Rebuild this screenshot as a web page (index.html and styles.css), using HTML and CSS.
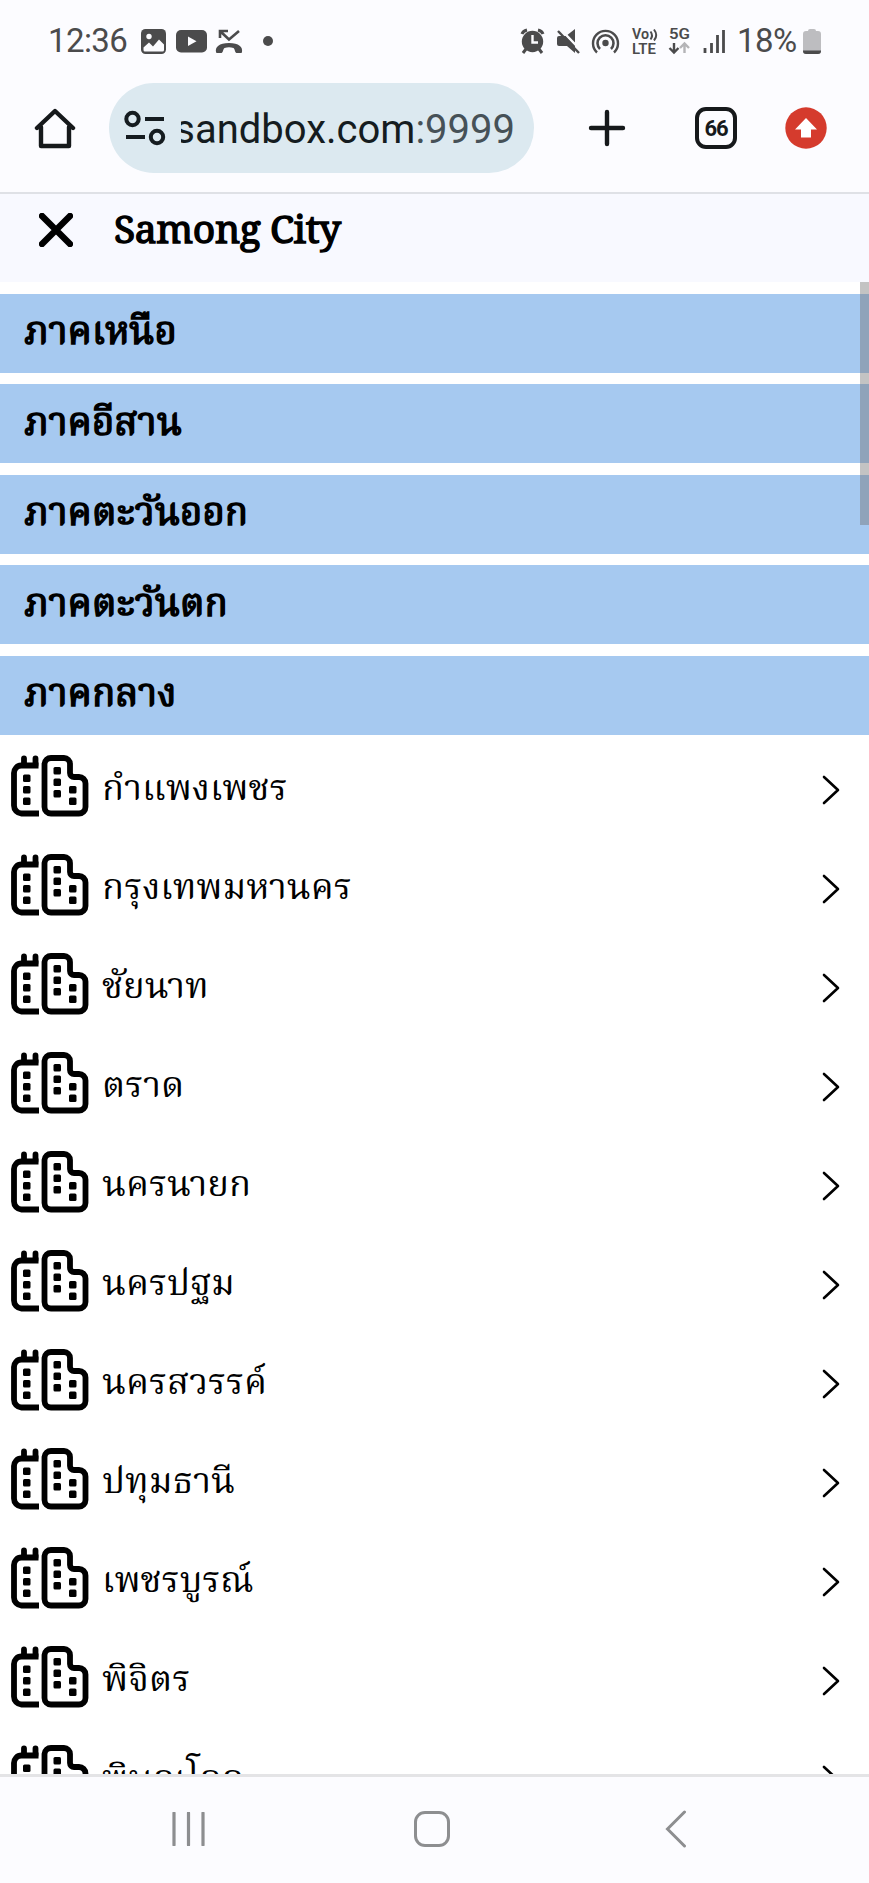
FILE: index.html
```html
<!DOCTYPE html>
<html lang="th">
<head>
  <meta charset="UTF-8">
  <meta name="viewport" content="width=device-width, initial-scale=1.0">
  <title>Samong City</title>
  <link rel="stylesheet" href="styles.css">
</head>
<body>
  <svg class="symbols">
    <symbol id="city" viewBox="0 0 78 62">
      <g fill="none" stroke="#000" stroke-width="5.8">
        <path d="M27.5 10.5H10.5a7.500 7.500 0 0 0-7.500 8v32a8 8 0 0 0 7.500 8H28" />
        <path d="M13 10V3.500M24.500 10V3.500" stroke-linecap="round" />
        <path d="M40 3H53a6 6 0 0 1 6 6V18a4 4 0 0 0 4 4h5a6.500 6.500 0 0 1 6.500 6.500V52a6.500 6.500 0 0 1-6.500 6.500H40a6.500 6.500 0 0 1-6.500-6.500V9A6.500 6.500 0 0 1 40 3z" />
      </g>
      <g class="windows">
        <rect x="12" y="19.500" width="7.500" height="7.500" rx="1.500" /><rect x="12" y="31" width="7.500" height="7.500" rx="1.500" /><rect x="12" y="42.500" width="7.500" height="7.500" rx="1.500" />
        <rect x="42.500" y="12" width="7.500" height="7.500" rx="1.500" /><rect x="42.500" y="23.500" width="7.500" height="7.500" rx="1.500" /><rect x="42.500" y="35" width="7.500" height="7.500" rx="1.500" />
        <rect x="58" y="31" width="7.500" height="7.500" rx="1.500" /><rect x="58" y="42.500" width="7.500" height="7.500" rx="1.500" />
      </g>
    </symbol>
    <symbol id="arrow" viewBox="0 0 18 30">
      <path d="M2 2L16 15L2 28" fill="none" stroke="#000" stroke-width="2.600" stroke-linecap="round" stroke-linejoin="round" />
    </symbol>
  </svg>

  <div class="status">
    <span class="clock">12:36</span>
    <svg class="notifications" viewBox="0 0 134 28">
      <rect x="0" y="2" width="25" height="25" rx="4.500" fill="#4b4b4c" />
      <circle cx="8" cy="9.500" r="2.700" fill="#fcfcff" />
      <path d="M2.500 20.500l5.500-5 4 4 6-7 5 5V23q0 1.500-1.500 1.500H4Q2.500 24.500 2.500 23z" fill="#fcfcff" />
      <rect x="35" y="3" width="31" height="22.500" rx="5" fill="#4b4b4c" />
      <path d="M47 9.500v9.500l8.500-4.700z" fill="#fcfcff" />
      <path d="M75 25c-1-5 3-9 13-9s14 4 13 9c0 1-1 1-2 1h-3.500c-1.500 0-1.500-4-3-5-3-1-6-1-9 0-1.500 1-1.500 5-3 5H77c-1 0-2 0-2-1z" fill="#4b4b4c" />
      <path d="M79 11V4h8M79 4l9 8.500L98 4" fill="none" stroke="#4b4b4c" stroke-width="2.600" />
      <circle cx="127" cy="14" r="5" fill="#4b4b4c" />
    </svg>
    <svg class="indicators" viewBox="0 0 208 28">
      <g fill="none" stroke="#4b4b4c" stroke-width="2.400">
        <circle cx="12.500" cy="14.500" r="9.500" fill="#4b4b4c" />
        <path d="M2 7q1-3 5-4M23 7q-1-3-5-4M6 22l-3 4M19 22l3 4" stroke-width="3" />
        <path d="M12.500 8v7.500h5.500" stroke="#fcfcff" />
        <path d="M46 9l9-7v14z" fill="#4b4b4c" stroke="none" />
        <path d="M37 11q0-2 2-2h7l9 9v8l-8-7h-8q-2 0-2-2z" fill="#4b4b4c" stroke="none" />
        <path d="M41 2.500l20 21" stroke="#fcfcff" stroke-width="2.400" />
        <path d="M38 4l21 22" />
        <path d="M77 25.500a12.500 12.500 0 1 1 17 0" />
        <path d="M80 22a8 8 0 1 1 11 0" stroke-width="2.600" />
        <circle cx="85.500" cy="16" r="2" fill="#4b4b4c" />
        <path d="M130.500 4.500q3 4 0 8M134 2.500q4.500 6 0 11" stroke-width="2" />
        <path d="M154 16v9M149.500 21l4.500 4.500 4.500-4.500" />
        <path d="M164.500 26v-9M160 21l4.500-4.500 4.500 4.500" stroke="#b4b4b7" />
        <path d="M185 21v5M191.500 16v10M197.500 8v18M203.500 3v23" stroke-width="2.800" />
      </g>
      <g class="indicator-text">
        <text x="112" y="12" textLength="17" lengthAdjust="spacingAndGlyphs">Vo</text>
        <text x="112" y="26.500" textLength="24" lengthAdjust="spacingAndGlyphs">LTE</text>
        <text x="149" y="12" textLength="21" lengthAdjust="spacingAndGlyphs">5G</text>
      </g>
    </svg>
    <span class="percent">18%</span>
    <svg class="battery" viewBox="0 0 18 25">
      <path d="M5 2q0-2 2-2h4q2 0 2 2h2q3 0 3 3v17q0 3-3 3H3q-3 0-3-3V5q0-3 3-3z" fill="#bdbdc0" />
      <path d="M0 21.500h18v.5q0 3-3 3H3q-3 0-3-3z" fill="#4b4b4c" />
    </svg>
  </div>

  <div class="toolbar">
    <svg class="home" viewBox="0 0 42 42">
      <path d="M3 21L21 4l18 17M7 20v19h28V20" fill="none" stroke="#16191b" stroke-width="4.400" stroke-linecap="round" stroke-linejoin="round" />
    </svg>
    <div class="address">
      <svg class="tune" viewBox="0 0 42 36">
        <g fill="none" stroke="#151c20" stroke-width="4">
          <circle cx="8.500" cy="9" r="6.200" /><circle cx="33" cy="27" r="6.200" />
          <path d="M21 9h19M2 27h19" />
        </g>
      </svg>
      <div class="url"><span>sandbox.com<span class="port">:9999</span></span></div>
    </div>
    <svg class="plus" viewBox="0 0 38 38">
      <path d="M3 19h32M19 3v32" stroke="#16191b" stroke-width="4.400" stroke-linecap="round" />
    </svg>
    <div class="tabs">66</div>
    <svg class="update" viewBox="0 0 42 42">
      <circle cx="21" cy="21" r="20.700" fill="#d53b2d" />
      <path d="M21 11L32 22.500H26V30.500H16V22.500H10z" fill="#fff" />
    </svg>
  </div>

  <main>
    <header>
      <svg class="close" viewBox="0 0 34 34">
        <path d="M3 3l28 28M31 3L3 31" stroke="#000" stroke-width="6.400" stroke-linecap="round" />
      </svg>
      <div class="title">Samong City</div>
    </header>
    <div class="content">
      <div class="region">ภาคเหนือ</div>
      <div class="region">ภาคอีสาน</div>
      <div class="region">ภาคตะวันออก</div>
      <div class="region">ภาคตะวันตก</div>
      <div class="region">ภาคกลาง</div>
      <div class="cities">
        <div class="city"><svg class="city-icon"><use href="#city" /></svg><span class="name">กำแพงเพชร</span><svg class="arrow"><use href="#arrow" /></svg></div>
        <div class="city"><svg class="city-icon"><use href="#city" /></svg><span class="name">กรุงเทพมหานคร</span><svg class="arrow"><use href="#arrow" /></svg></div>
        <div class="city"><svg class="city-icon"><use href="#city" /></svg><span class="name">ชัยนาท</span><svg class="arrow"><use href="#arrow" /></svg></div>
        <div class="city"><svg class="city-icon"><use href="#city" /></svg><span class="name">ตราด</span><svg class="arrow"><use href="#arrow" /></svg></div>
        <div class="city"><svg class="city-icon"><use href="#city" /></svg><span class="name">นครนายก</span><svg class="arrow"><use href="#arrow" /></svg></div>
        <div class="city"><svg class="city-icon"><use href="#city" /></svg><span class="name">นครปฐม</span><svg class="arrow"><use href="#arrow" /></svg></div>
        <div class="city"><svg class="city-icon"><use href="#city" /></svg><span class="name">นครสวรรค์</span><svg class="arrow"><use href="#arrow" /></svg></div>
        <div class="city"><svg class="city-icon"><use href="#city" /></svg><span class="name">ปทุมธานี</span><svg class="arrow"><use href="#arrow" /></svg></div>
        <div class="city"><svg class="city-icon"><use href="#city" /></svg><span class="name">เพชรบูรณ์</span><svg class="arrow"><use href="#arrow" /></svg></div>
        <div class="city"><svg class="city-icon"><use href="#city" /></svg><span class="name">พิจิตร</span><svg class="arrow"><use href="#arrow" /></svg></div>
        <div class="city"><svg class="city-icon"><use href="#city" /></svg><span class="name">พิษณุโลก</span><svg class="arrow"><use href="#arrow" /></svg></div>
      </div>
      <div class="scrollbar"></div>
    </div>
  </main>

  <nav>
    <svg class="recents" viewBox="0 0 34 34">
      <path d="M2 1v32M16.500 1v32M31 1v32" stroke="#8d8e90" stroke-width="3.200" stroke-linecap="round" />
    </svg>
    <div class="home-button"></div>
    <svg class="back" viewBox="0 0 22 38">
      <path d="M19.500 2L2.500 19l17 17" fill="none" stroke="#8d8e90" stroke-width="3" stroke-linecap="round" />
    </svg>
  </nav>
</body>
</html>
```

FILE: styles.css
```css
* { box-sizing: border-box; }

body {
  margin: 0;
  height: 1883px;
  display: flex;
  flex-direction: column;
  overflow: hidden;
  background-color: #fcfcff;
  font-family: Roboto, sans-serif;
}

svg {
  display: block;
  flex: none;
}

.symbols {
  position: absolute;
  width: 0;
  height: 0;
}

.status {
  flex: none;
  display: flex;
  align-items: center;
  height: 82px;
  padding: 0 48px 0 48px;
  color: #4b4b4c;
  font-size: 33px;
  font-weight: 400;
}

.clock {
  width: 93px;
  margin-top: -1px;
  letter-spacing: -0.6px;
}

.notifications {
  width: 134px;
  height: 28px;
}

.indicators {
  width: 208px;
  height: 28px;
  margin-left: auto;
}

.indicator-text {
  fill: #4b4b4c;
  font-size: 14px;
  font-weight: 600;
}

.percent {
  width: 65px;
  margin-top: -1px;
  margin-left: 9px;
  letter-spacing: -0.5px;
}

.battery {
  width: 18px;
  height: 25px;
  margin-left: 1px;
}

.toolbar {
  flex: none;
  display: flex;
  align-items: center;
  height: 112px;
  padding: 0 42px 18px 34px;
  border-bottom: 2px solid #dfe1e6;
}

.home {
  width: 42px;
  height: 42px;
}

.address {
  display: flex;
  align-items: center;
  width: 425px;
  height: 90px;
  margin-left: 33px;
  padding-left: 15px;
  border-radius: 45px;
  background-color: #dce9f0;
}

.tune {
  width: 42px;
  height: 36px;
}

.url {
  display: flex;
  justify-content: flex-end;
  width: 334px;
  margin: 2px 0 0 15px;
  overflow: hidden;
  color: #151c20;
  font-size: 40px;
  white-space: nowrap;
}

.port {
  color: #465157;
}

.plus {
  width: 38px;
  height: 38px;
  margin-left: 54px;
}

.tabs {
  display: flex;
  justify-content: center;
  align-items: center;
  width: 42px;
  height: 42px;
  margin-left: 69px;
  border: 4px solid #16191b;
  border-radius: 11px;
  font-size: 22px;
  font-weight: 700;
  letter-spacing: -1px;
  color: #16191b;
}

.update {
  width: 42px;
  height: 42px;
  margin-left: auto;
}

main {
  flex: 1;
  min-height: 0;
  display: flex;
  flex-direction: column;
  background-color: #fff;
}

header {
  flex: none;
  display: flex;
  align-items: center;
  height: 88px;
  padding: 0 0 17px 39px;
  background-color: #f8f9ff;
}

.close {
  width: 34px;
  height: 34px;
}

.title {
  margin-top: -5px;
  margin-left: 41px;
  font-family: "Noto Serif", "DejaVu Serif Condensed", "DejaVu Serif", serif;
  font-size: 39px;
  -webkit-text-stroke: 1.4px #000;
  letter-spacing: -0.4px;
  white-space: nowrap;
}

.content {
  position: relative;
  flex: 1;
  min-height: 0;
  overflow: hidden;
  font-family: "Noto Serif Thai", "Noto Sans Thai", "Noto Sans", serif;
}

.region {
  display: flex;
  align-items: center;
  height: 79px;
  margin: 11.5px 0;
  padding-top: 2px;
  padding-left: 24px;
  background-color: #a6c9f0;
  font-size: 38.4px;
  -webkit-text-stroke: 1.5px #000;
  white-space: nowrap;
}

.region + .region { margin-top: 0; }

.cities { margin-top: -9.5px; }

.city {
  display: flex;
  align-items: center;
  height: 99px;
  padding: 0 29px 0 11px;
}

.city-icon {
  width: 78px;
  height: 62px;
}

.name {
  margin-top: 7px;
  margin-left: 13px;
  font-size: 36.3px;
  white-space: nowrap;
}

.arrow {
  width: 18px;
  height: 30px;
  margin-top: 8px;
  margin-left: auto;
}

.scrollbar {
  position: absolute;
  top: 0;
  right: 0;
  width: 9px;
  height: 243px;
  background-color: rgba(112, 112, 112, 0.42);
}

nav {
  flex: none;
  display: flex;
  align-items: center;
  height: 109px;
  padding: 0 0 2px 172px;
  border-top: 3px solid #e4e4e6;
}

.recents {
  width: 34px;
  height: 34px;
}

.home-button {
  width: 36px;
  height: 36px;
  margin-left: 208px;
  border: 3px solid #8d8e90;
  border-radius: 11px;
}

.back {
  width: 22px;
  height: 38px;
  margin-left: 215px;
}
```
